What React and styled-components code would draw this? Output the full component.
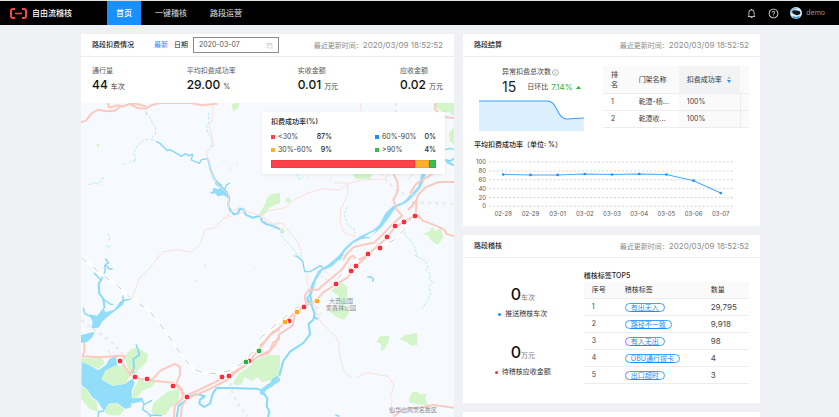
import styled, { createGlobalStyle } from "styled-components";
import {
  AiOutlineBell,
  AiOutlineCalendar,
  AiOutlineInfoCircle,
  AiOutlineQuestionCircle,
} from "react-icons/ai";

const GlobalStyle = createGlobalStyle`
  * {
    box-sizing: border-box;
  }
  body {
    margin: 0;
    background-color: #f0f1f5;
    color: #333;
    font-family: Inter, "Noto Sans CJK SC", sans-serif;
    font-size: 7px;
    line-height: 12px;
  }
  button, input {
    font: inherit;
    color: inherit;
    border: none;
    padding: 0;
    margin: 0;
    background: none;
  }
  button {
    cursor: pointer;
  }
  h1, h2, h3, p, dl, dd {
    margin: 0;
    font-size: inherit;
  }
`;

const Page = styled.div`
  min-height: 100vh;
  display: flex;
  flex-direction: column;
`;

const Header = styled.header`
  display: flex;
  align-items: stretch;
  height: 25px;
  border-top: 1px solid #dfe1e2;
  background-color: #000;
  color: #d4d4d4;
`;

const Brand = styled.div`
  display: flex;
  align-items: center;
  gap: 5px;
  padding-left: 10px;
  margin-right: 35px;
`;

const BrandName = styled.h1`
  color: #fff;
  font-size: 8px;
  font-weight: 500;
`;

const Nav = styled.nav`
  flex: 1;
  display: flex;
  gap: 5px;
`;

const NavLink = styled.a`
  display: flex;
  align-items: center;
  padding: 0 9px;
  font-size: 8px;
  font-weight: ${(props) => (props.$active ? 500 : 400)};
  text-decoration: none;
  color: ${(props) => (props.$active ? "#fff" : "#e0e0e0")};
  background-color: ${(props) => (props.$active ? "#1890ff" : "transparent")};
`;

const Tools = styled.div`
  display: flex;
  align-items: center;
  gap: 11px;
  padding-right: 14px;
`;

const ToolButton = styled.button`
  display: flex;
  align-items: center;
  gap: 4px;
  color: ${(props) => (props.$muted ? "#9a9a9a" : "#e4e4e4")};
`;

const Main = styled.main`
  flex: 1;
  display: grid;
  grid-template-columns: 373fr 297fr;
  gap: 9px;
  padding: 9px 79px 0 81px;
`;

const Column = styled.div`
  display: flex;
  flex-direction: column;
  gap: 9px;
`;

const Panel = styled.section`
  display: flex;
  flex-direction: column;
  flex: ${(props) => (props.$grow ? 1 : "none")};
  background-color: #fff;
`;

const PanelHead = styled.div`
  display: flex;
  align-items: center;
  height: 23px;
  padding: 0 11px;
  border-bottom: 1px solid #ebedf0;
`;

const Title = styled.h2`
  font-weight: 500;
  color: #1c1c1c;
`;

const Updated = styled.p`
  margin-left: auto;
  color: #8c8c8c;

  time {
    font-size: 8px;
  }
`;

const Latest = styled.button`
  margin-left: 20px;
  color: #1890ff;
`;

const DateLabel = styled.label`
  display: flex;
  align-items: center;
  gap: 5px;
  margin-left: 6px;
  color: #222;
`;

const DateBox = styled.span`
  display: flex;
  align-items: center;
  width: 86px;
  height: 16px;
  padding: 0 5px;
  border: 1px solid #8a8a8a;
  color: #bbb;
`;

const DateInput = styled.input`
  flex: 1;
  min-width: 0;
  color: #555;
  outline: none;
`;

const Stats = styled.dl`
  display: flex;
  justify-content: space-between;
  padding: 8px 11px 9px;
`;

const StatLabel = styled.dt`
  color: #595959;
`;

const StatValue = styled.dd`
  font-size: 12px;
  line-height: 15px;
  font-weight: 500;
  color: #111;
`;

const Unit = styled.span`
  margin-left: ${(props) => (props.$tight ? 0 : 3)}px;
  font-size: 7px;
  font-weight: 400;
  color: ${(props) => (props.$tight ? "#777" : "#444")};
`;

const MapArea = styled.div`
  flex: 1;
  position: relative;
  min-height: 240px;
  overflow: hidden;
  background-color: #f6faff;
`;

const MapSvg = styled.svg`
  position: absolute;
  inset: 0;
  width: 100%;
  height: 100%;
  fill: none;
  stroke-linejoin: round;
`;

const LegendCard = styled.div`
  position: absolute;
  top: 9px;
  right: 9px;
  width: 183px;
  padding: 4px 9px 6px;
  background-color: #fff;
  box-shadow: 0 1px 3px rgba(0, 0, 0, 0.08);
`;

const LegendTitle = styled.h3`
  font-weight: 500;
  color: #222;
`;

const LegendGrid = styled.ul`
  display: grid;
  grid-template-columns: 61px 61px;
  justify-content: space-between;
  margin: 2px 0 4px;
  padding: 0;
  list-style: none;
`;

const LegendItem = styled.li`
  display: flex;
  align-items: center;
  gap: 3px;
  height: 13px;
  color: #444;

  &::before {
    content: "";
    width: 4px;
    height: 4px;
    background-color: ${(props) => props.$color};
  }
  strong {
    margin-left: auto;
    font-weight: 500;
    color: #222;
  }
`;

const RateBar = styled.div`
  display: flex;
  height: 8px;
`;

const RatePart = styled.span`
  flex: ${(props) => props.$share};
  background-color: ${(props) => props.$color};
  box-shadow: inset 0 0 0 1px rgba(0, 0, 0, 0.08);
`;

const SettleBody = styled.div`
  display: grid;
  grid-template-columns: 114fr 145fr;
  gap: 14px;
  padding: 9px 11px 0;
`;

const Abnormal = styled.div`
  display: flex;
  flex-direction: column;
  padding: 0 5px;
`;

const AbnormalTitle = styled.h3`
  display: flex;
  align-items: center;
  gap: 1px;
  padding-left: 23px;
  font-weight: 400;
  color: #444;
`;

const AbnormalRow = styled.p`
  display: flex;
  align-items: center;
  height: 18px;
  margin-bottom: 4px;
  padding-left: 23px;
  white-space: nowrap;
  color: #444;
`;

const AbnormalCount = styled.span`
  margin-right: 11px;
  font-size: 14px;
  color: #222;
`;

const Rise = styled.span`
  display: flex;
  align-items: center;
  gap: 3px;
  margin-left: 3px;
  font-size: 8px;
  color: #1fb141;
`;

const MiniChart = styled.svg`
  width: 100%;
  height: 31px;
`;

const Table = styled.table`
  width: 100%;
  table-layout: fixed;
  border-collapse: separate;
  border-spacing: 0;
  color: #444;
`;

const Th = styled.th`
  width: ${(props) => props.$width};
  height: ${(props) => (props.$tall ? 28 : 17)}px;
  padding: 0 8px;
  border-bottom: 1px solid #ebedf0;
  background-color: ${(props) => (props.$sorted ? "#f2f3f5" : "#fafafa")};
  font-weight: 400;
  line-height: 10px;
  text-align: left;
  color: #333;
`;

const Td = styled.td`
  height: 17px;
  padding: 0 0 0 8px;
  border-bottom: 1px solid #ebedf0;
  background-color: ${(props) => (props.$sorted ? "#fafafa" : "#fff")};
  white-space: nowrap;
`;

const CountTd = styled(Td)`
  font-size: 8px;
`;

const Gutter = styled.td`
  border-left: 1px solid #ebedf0;
  border-bottom: 1px solid #ebedf0;
  background-color: #fafafa;
`;

const SortButton = styled.button`
  display: flex;
  align-items: center;
  gap: 5px;
  white-space: nowrap;
`;

const ChartBox = styled.div`
  padding: 8px 11px 6px;
`;

const LineChart = styled.svg`
  display: block;
  width: 100%;
  margin-top: 3px;
  font-size: 6px;
  fill: #555;
`;

const AuditBody = styled.div`
  display: grid;
  grid-template-columns: 97fr 164fr;
  gap: 12px;
  padding: 12px 11px 19px;
`;

const Totals = styled.div`
  display: flex;
  flex-direction: column;
  align-items: center;
  gap: 22px;
  padding-top: 14px;
`;

const Total = styled.div`
  display: flex;
  flex-direction: column;
  align-items: center;
`;

const TotalValue = styled.p`
  font-size: 16px;
  font-weight: 500;
  line-height: 20px;
  color: #111;
`;

const TotalLabel = styled.p`
  display: flex;
  align-items: center;
  gap: 4px;
  color: #333;

  &::before {
    content: "";
    width: 3px;
    height: 3px;
    border-radius: 50%;
    background-color: ${(props) => props.$color};
  }
`;

const Tag = styled.a`
  display: block;
  width: fit-content;
  height: 9px;
  padding: 0 5px;
  border: 1px solid #40a0ff;
  border-radius: 5px;
  line-height: 7px;
  color: #1890ff;
`;

const stats = [
  { label: "通行量", value: "44", unit: "车次" },
  { label: "平均扣费成功率", value: "29.00", unit: "%" },
  { label: "实收金额", value: "0.01", unit: "万元" },
  { label: "应收金额", value: "0.02", unit: "万元" },
];

const rates = [
  { name: "<30%", value: 87, color: "#ff4249" },
  { name: "60%-90%", value: 0, color: "#1890ff" },
  { name: "30%-60%", value: 9, color: "#ffb02e" },
  { name: ">90%", value: 4, color: "#35bf4d" },
];

const gates = [
  { name: "乾潭-杨...", rate: "100%" },
  { name: "乾潭收...", rate: "100%" },
];

const daily = [
  { day: "02-28", rate: 72 },
  { day: "02-29", rate: 71 },
  { day: "03-01", rate: 71 },
  { day: "03-02", rate: 73 },
  { day: "03-03", rate: 72 },
  { day: "03-04", rate: 73 },
  { day: "03-05", rate: 72 },
  { day: "03-06", rate: 58 },
  { day: "03-07", rate: 30 },
];

const tags = [
  { name: "有出无入", count: "29,795" },
  { name: "路径不一致", count: "9,918" },
  { name: "有入无出", count: "98" },
  { name: "OBU通行拔卡", count: "4" },
  { name: "出口超时", count: "3" },
];

const red = "#fb2f3b";
const orange = "#ffaa22";
const green = "#2db345";

const pins = [
  [415, 216, red], [404, 222, red], [395, 226, red], [387, 237, red],
  [380, 248, red], [368, 254, red], [356, 266, red], [351, 271, red],
  [336, 284, red], [317, 301, orange], [304, 307, red], [297, 312, orange],
  [289, 321, red], [285, 322, orange], [259, 351, green], [249, 361, red],
  [246, 362, green], [229, 376, red], [222, 377, red], [187, 397, red],
  [173, 386, red], [147, 379, red], [135, 377, red], [120, 361, red],
];

// Each tile is drawn in its own grid, three units to a map unit.
const tiles = [
  {
    x: 80,
    y: 100,
    woods:
      "M455 12L478 8L476 24L460 35L457 25ZM50 133h8v7h-8zM194 34l8 0l2 6l-6 4zM538 342L552 318L562 292L575 282L600 278L612 288L598 310L570 322L548 348Z",
    lakes:
      "M403 246L425 252L427 264L434 272L448 284L451 294L442 294L432 286L412 289L406 280L393 282L391 277L400 274L396 266L405 264L417 268L420 263L408 256Z",
    rivers:
      "M385 178L390 205L403 237L424 260L440 276L447 295L445 318L452 333L462 343L474 341L478 328L490 327L497 344L517 353L541 348L546 364L560 373L580 377L600 388",
    streams:
      "M228 124L240 130L262 152L270 149L305 169L317 161L326 167L338 163L334 180L358 190L365 179L385 176M432 277L438 256L450 249",
    creeks:
      "M198 40L214 58L218 72L226 80L227 102L216 112L222 122L212 118L192 120L172 138L163 155L166 183M387 38L386 70L380 76L384 102L392 108L398 135L390 138M128 194l8-3M148 187l14-6l2 10M25 254l20-6l12 5l8-18l12 0M430 182h4M449 209h3M469 193h4M85 402l5 12l-5 12M76 438l12-2l-4 10M74 477l8 1",
    roads:
      "M0 68L18 61L36 39L56 29L78 34L104 32L120 21L150 12L172 24L198 26L215 15L242 9L330 8L365 16L412 11M82 8L88 23L112 16L134 20M150 8L180 14L200 20",
    lanes:
      "M400 12L398 58L387 78L396 108L400 138L378 155L386 180L391 212L410 250L446 285L446 330M229 480L248 456L290 449L336 457L362 430L374 390L403 384L430 356L456 335L483 320L497 334L540 346L600 385M430 356L470 345L500 330M600 364L580 378",
    rail: "",
    border: "",
  },
  {
    x: 260,
    y: 100,
    woods:
      "M79 293l10 2l3 8l-6 6l-9-4zM278 226L290 219L320 217L337 225L330 236L288 238ZM524 8L582 8L582 48L566 36L552 38L528 24ZM567 98L582 80L582 134L568 124ZM487 402L506 396L517 381L526 393L543 384L550 412L534 434L515 424L503 405ZM62 386l8-1l5 8l-5 8l-9-3zM100 464h8v7h-8z",
    lakes:
      "M485 218L498 218L492 240L480 266L457 292L439 308L407 323L385 355L366 380L330 413L304 417L280 429L255 453L241 480L227 480L252 446L274 426L302 408L340 390L358 374L376 340L399 318L430 306L454 282L474 260ZM312 410L334 411L350 391L330 400Z",
    rivers: "M555 180L570 183L582 176M560 186L582 196",
    streams: "M550 151L568 145L582 148",
    creeks:
      "M0 358L16 366L42 386L60 384L66 410L94 440L116 468L124 480M98 218l15 9l2 10l14-3M139 235l5 0M210 236h4M262 320L253 346L266 379L284 388L285 402M430 382L437 406L458 430L466 448L474 474",
    roads:
      "M526 8L524 26L538 42L560 52L582 54M582 246L536 246L497 262L474 284L470 300L444 330M401 222L412 246L414 272L400 300L410 328L426 347L396 374L374 398L342 428L310 434L280 442L259 463L250 480M450 280L470 250L494 236L530 214L545 200M470 300L467 340L488 362L520 374L552 388L560 402L582 408M465 345L430 366L402 384L380 414L350 440L318 468L296 480",
    lanes:
      "M301 8L304 34M0 350L24 333L78 322L96 303L144 279L184 266L242 270L265 250L308 240L370 237L405 212M222 248L264 250L262 285L242 330L240 366L252 398L288 411M0 350L30 372L68 371L94 404L110 420L123 452L126 480M446 240L458 220M470 290L450 280",
    rail: "M457 305L461 340L430 392L402 420L360 442L300 486",
    border: "M362 218L380 242L407 270L438 284L470 307L582 312M407 8L407 36",
  },
  {
    x: 80,
    y: 255,
    woods:
      "M132 305L150 285L170 276L204 298L200 322L178 342L166 358L148 350ZM64 372L76 346L104 333L128 332L150 362L138 386L98 392ZM154 428L162 400L178 373L230 375L218 394L186 408L170 430ZM214 470L220 444L262 410L300 400L296 436L270 460L256 480L224 480ZM0 392L22 406L34 428L50 440L54 470L28 462L0 426ZM72 468L86 446L108 444L134 464L118 482L84 480ZM0 309L68 310L74 326L54 342L36 334L6 322ZM459 384L474 358L504 338L524 316L568 300L602 300L614 312L612 350L574 374L545 382L534 366L516 378L492 366L486 388L468 391Z",
    lakes:
      "M5 318L34 334L54 346L78 330L88 312L108 302L112 330L80 346L66 374L98 392L136 386L158 370L164 384L154 410L158 430L186 428L184 440L152 446L154 456L136 462L110 443L88 446L72 468L52 438L36 426L22 404L4 390ZM28 178L52 182L70 158L76 172L102 164L120 142L134 136L128 150L92 178L66 200L56 218L34 220L38 202ZM3 240L44 230L38 246L20 262L3 264Z",
    rivers:
      "M66 70L56 86L58 116L70 132L74 160M610 362L590 382L564 390L545 406L530 401L448 399L410 399L398 416L390 446L372 456L358 446L360 434L374 424L352 417L330 424L312 440L296 452L290 486M544 406L562 430L560 454L568 470L564 486M174 284L178 300L160 312L162 336L158 356",
    streams:
      "M76 12L86 24L76 28L88 42L98 42M74 30L76 46L66 70M42 54L54 66L62 74M156 132L130 136L118 146M128 122L130 136M70 132L92 148L100 148M10 158L14 176L34 186M168 268L174 284M184 428L192 448L188 464L204 474L212 486M192 448L216 436M54 486L56 470L72 468M206 480L246 482",
    creeks: "M372 30l6 3M346 77h4M524 38h3M86 286L90 302",
    roads:
      "M12 262L14 285L8 304L60 307L118 302L134 304L126 322L150 358L170 370L206 374L226 378L280 383L300 402L322 428M218 372L242 346L284 327L299 334L300 358L290 384L306 404L308 430L284 452L282 486M312 424L350 408L400 384L448 360L504 324L536 284L572 238L600 222M322 430L380 406L440 376L470 350L532 306L566 294L580 262L596 254L602 232M322 430L306 452L302 486M150 358L160 340",
    lanes: "M238 0L220 26L194 54L178 70L166 104L156 134",
    rail: "M5 8L60 54L112 92L156 132L206 166L246 214L284 270L318 318L344 344L374 354L410 356L450 346L484 326L540 270L600 205",
    border: "M4 196L60 236L104 268L130 300M446 362L456 410L474 446L502 484",
  },
  {
    x: 260,
    y: 255,
    woods:
      "M214 108L228 92L246 82L262 96L262 124L254 150L268 172L252 194L234 188L206 168L240 164L236 124ZM350 260L360 244L388 243L385 264L370 287L362 284L363 268ZM419 252L436 240L471 234L472 270L456 273L440 262ZM447 432L456 412L474 410L480 418L502 418L496 430L504 452L450 444ZM98 0h10l-3 6z",
    lakes:
      "M238 0L252 0L216 34L186 48L168 76L158 110L152 126L146 124L152 92L174 48L206 28ZM52 362L58 366L40 392L20 404L8 420L0 418L0 404L28 388L36 372Z",
    rivers:
      "M152 124L154 150L164 176L160 194L146 206L150 238L130 264L90 290L70 318L58 362M152 118L142 128L144 140L154 140M160 186L174 192",
    streams:
      "M108 2L128 18L134 50L150 50L182 32L192 42M322 66L334 66L341 74L336 80M226 480L238 484",
    creeks:
      "M463 0L476 8L496 18L505 36L498 44L512 58L508 74L520 80L506 96L512 116L500 140L484 162",
    roads:
      "M264 12L280 0L286 12M270 8L244 46L204 78L174 104L146 104L134 124L138 146L120 162M326 0L296 26L262 68L228 88L190 112L168 136L138 152L100 178L64 212L30 240L0 276M130 155L104 182L98 212L58 238L46 270L28 288L0 302M402 484L430 462L490 456L520 450L582 458",
    lanes:
      "M176 56L198 72L218 88M188 40L224 76M142 54L140 84L152 102M158 134L170 174L184 204L226 244L236 262L240 308L252 350L276 368M290 368L322 353L384 364L402 392L390 428M396 430L394 470L400 486",
    rail: "M0 250L50 206L106 160L128 150M232 70L292 14",
    border: "M152 150L170 150L182 180",
  },
];

const Tile = ({ tile }) => (
  <svg x={tile.x} y={tile.y} width="200" height="162" viewBox="0 0 600 486">
    <path d={tile.border} stroke="#e9ecef" strokeWidth="8" strokeDasharray="10 12" />
    <path d={tile.lakes} fill="#91ddfa" />
    <path d={tile.woods} fill="#d3f5c9" />
    <path d={tile.creeks} stroke="#9bdcf3" strokeWidth="2" strokeDasharray="9 4" />
    <path d={tile.streams} stroke="#83d6f5" strokeWidth="4" />
    <path d={tile.rivers} stroke="#86daf8" strokeWidth="6" />
    <path d={tile.lanes} stroke="#fce0da" strokeWidth="3" />
    <path d={tile.rail} stroke="#fff" strokeWidth="9" />
    <path d={tile.rail} stroke="#c9cccf" strokeWidth="3" strokeDasharray="20 24" />
    <path d={tile.roads} stroke="#fbcabf" strokeWidth="6" />
  </svg>
);

const RoadMap = () => (
  <MapSvg viewBox="81 103 373 314" preserveAspectRatio="xMidYMin slice" role="img" aria-label="路段地图">
    {tiles.map((tile) => (
      <Tile key={`${tile.x}-${tile.y}`} tile={tile} />
    ))}
    <g fill="#8a8a8a" fontSize="6" textAnchor="middle">
      <text x="341" y="303">大奇山国</text>
      <text x="341" y="310">家森林公园</text>
      <text x="413" y="412">仙华山风景名胜区</text>
    </g>
    {pins.map(([x, y, color]) => (
      <circle key={`${x}-${y}`} cx={x} cy={y} r="3" fill={color} stroke="#fff" />
    ))}
  </MapSvg>
);

const Logo = () => (
  <svg width="17" height="11" viewBox="0 0 17 11" fill="none" stroke="#f4484b" strokeWidth="2">
    <path d="M5 1H3Q1 1 1 3V8Q1 10 3 10H5M12 1H14Q16 1 16 3V8Q16 10 14 10H12" />
    <path d="M5 5.5H12" strokeWidth="1.5" />
  </svg>
);

const Avatar = () => (
  <svg width="12" height="12" viewBox="0 0 24 24">
    <circle cx="12" cy="12" r="12" fill="#dcecf8" />
    <path d="M2 5Q8 -1 16 2L11 5Q5 5 3 12L0 13Q0 8 2 5Z" fill="#8bb9dc" />
    <path d="M4 9Q7 5 14 7Q20 7 21 11Q20 16 16 16Q11 17 8 14Q5 14 4 9Z" fill="#101820" />
    <path d="M6 18Q12 22 18 18L20 21Q12 26 5 21Z" fill="#3f8fce" />
  </svg>
);

const pointX = (i) => 29 + i * 27;
const pointY = (rate) => 52 - rate * 0.44;

const DailyChart = () => (
  <LineChart viewBox="0 0 273 66">
    {[0, 20, 40, 60, 80, 100].map((tick) => (
      <g key={tick}>
        <text x="12" y={pointY(tick) + 2} textAnchor="end">{tick}</text>
        <path d={`M15 ${pointY(tick)}H259`} stroke="#d4d4d4" strokeDasharray="2 2" />
      </g>
    ))}
    <polyline
      points={daily.map((d, i) => `${pointX(i)},${pointY(d.rate)}`).join(" ")}
      fill="none"
      stroke="#4aa8ff"
    />
    {daily.map((d, i) => (
      <g key={d.day}>
        <circle cx={pointX(i)} cy={pointY(d.rate)} r="1.3" fill="#1890ff" />
        <text x={pointX(i)} y="62" textAnchor="middle">{d.day}</text>
      </g>
    ))}
  </LineChart>
);

const UpdateTime = () => (
  <Updated>
    最近更新时间：<time>2020/03/09 18:52:52</time>
  </Updated>
);

const App = () => {
  return (
    <>
      <GlobalStyle />
      <Page>
        <Header>
          <Brand>
            <Logo />
            <BrandName>自由流稽核</BrandName>
          </Brand>
          <Nav>
            <NavLink href="#home" $active>首页</NavLink>
            <NavLink href="#audit">一键稽核</NavLink>
            <NavLink href="#operation">路段运营</NavLink>
          </Nav>
          <Tools>
            <ToolButton aria-label="通知"><AiOutlineBell size={11} /></ToolButton>
            <ToolButton aria-label="帮助"><AiOutlineQuestionCircle size={11} /></ToolButton>
            <ToolButton $muted><Avatar />demo</ToolButton>
          </Tools>
        </Header>

        <Main>
          <Panel>
            <PanelHead>
              <Title>路段扣费情况</Title>
              <Latest>最新</Latest>
              <DateLabel>
                日期
                <DateBox>
                  <DateInput type="text" defaultValue="2020-03-07" />
                  <AiOutlineCalendar size={7} />
                </DateBox>
              </DateLabel>
              <UpdateTime />
            </PanelHead>
            <Stats>
              {stats.map((item) => (
                <div key={item.label}>
                  <StatLabel>{item.label}</StatLabel>
                  <StatValue>
                    {item.value}
                    <Unit>{item.unit}</Unit>
                  </StatValue>
                </div>
              ))}
            </Stats>
            <MapArea>
              <RoadMap />
              <LegendCard>
                <LegendTitle>扣费成功率(%)</LegendTitle>
                <LegendGrid>
                  {rates.map((item) => (
                    <LegendItem key={item.name} $color={item.color}>
                      {item.name}
                      <strong>{item.value}%</strong>
                    </LegendItem>
                  ))}
                </LegendGrid>
                <RateBar>
                  {rates.filter((item) => item.value > 0).map((item) => (
                    <RatePart key={item.name} $share={item.value} $color={item.color} />
                  ))}
                </RateBar>
              </LegendCard>
            </MapArea>
          </Panel>

          <Column>
            <Panel>
              <PanelHead>
                <Title>路段结算</Title>
                <UpdateTime />
              </PanelHead>
              <SettleBody>
                <Abnormal>
                  <AbnormalTitle>
                    异常扣费总次数
                    <AiOutlineInfoCircle size={7} color="#777" />
                  </AbnormalTitle>
                  <AbnormalRow>
                    <AbnormalCount>15</AbnormalCount>
                    日环比
                    <Rise>
                      7.14%
                      <svg width="5" height="3" viewBox="0 0 5 3" fill="currentColor">
                        <path d="M0 3L2.5 0L5 3Z" />
                      </svg>
                    </Rise>
                  </AbnormalRow>
                  <MiniChart viewBox="0 0 104 31" preserveAspectRatio="none">
                    <path d="M0 1H68C78 1 77 19 87 19L104 18V31H0Z" fill="#dcefff" />
                    <path d="M0 1H68C78 1 77 19 87 19L104 18" fill="none" stroke="#3a9eff" />
                  </MiniChart>
                </Abnormal>
                <div>
                  <Table>
                    <thead>
                      <tr>
                        <Th $width="19%" $tall>排名</Th>
                        <Th $width="33%" $tall>门架名称</Th>
                        <Th $width="42%" $tall $sorted>
                          <SortButton>
                            扣费成功率
                            <svg width="4" height="7" viewBox="0 0 4 7">
                              <path d="M0 3L2 0L4 3Z" fill="#bfbfbf" />
                              <path d="M0 4L2 7L4 4Z" fill="#1890ff" />
                            </svg>
                          </SortButton>
                        </Th>
                        <Th as="td" $width="6%" $tall />
                      </tr>
                    </thead>
                    <tbody>
                      {gates.map((gate, i) => (
                        <tr key={gate.name}>
                          <Td>{i + 1}</Td>
                          <Td>{gate.name}</Td>
                          <Td $sorted>{gate.rate}</Td>
                          <Gutter />
                        </tr>
                      ))}
                    </tbody>
                  </Table>
                </div>
              </SettleBody>
              <ChartBox>
                <Title as="h3">平均扣费成功率（单位: %）</Title>
                <DailyChart />
              </ChartBox>
            </Panel>

            <Panel>
              <PanelHead>
                <Title>路段稽核</Title>
                <UpdateTime />
              </PanelHead>
              <AuditBody>
                <Totals>
                  <Total>
                    <TotalValue>0<Unit $tight>车次</Unit></TotalValue>
                    <TotalLabel $color="#1890ff">推送稽核车次</TotalLabel>
                  </Total>
                  <Total>
                    <TotalValue>0<Unit $tight>万元</Unit></TotalValue>
                    <TotalLabel $color="#fb2f3b">待稽核应收金额</TotalLabel>
                  </Total>
                </Totals>
                <div>
                  <Title as="h3">稽核标签TOP5</Title>
                  <Table>
                    <thead>
                      <tr>
                        <Th $width="20%">序号</Th>
                        <Th $width="52%">稽核标签</Th>
                        <Th $width="28%">数量</Th>
                      </tr>
                    </thead>
                    <tbody>
                      {tags.map((tag, i) => (
                        <tr key={tag.name}>
                          <Td>{i + 1}</Td>
                          <Td><Tag href={`#tag-${i + 1}`}>{tag.name}</Tag></Td>
                          <CountTd>{tag.count}</CountTd>
                        </tr>
                      ))}
                    </tbody>
                  </Table>
                </div>
              </AuditBody>
            </Panel>

            <Panel $grow />
          </Column>
        </Main>
      </Page>
    </>
  );
};

export default App;
